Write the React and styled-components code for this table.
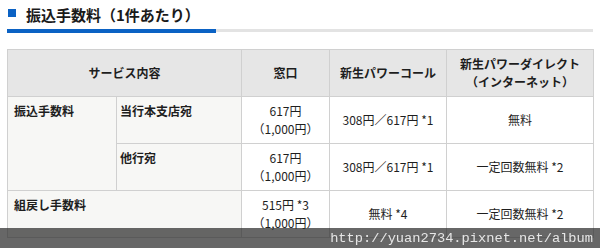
import styled, { createGlobalStyle } from "styled-components";

const GlobalStyle = createGlobalStyle`
  html, body {
    margin: 0;
    padding: 0;
    background: #fff;
  }
  body {
    font-family: "Noto Sans CJK JP", "Noto Sans", sans-serif;
    color: #1e1e1e;
  }
`;

const rows = [
  {
    label: "振込手数料",
    sub: "当行本支店宛",
    counter: ["617円", "（1,000円）"],
    call: "308円／617円 *1",
    direct: "無料",
    labelSpan: 2,
  },
  {
    sub: "他行宛",
    counter: ["617円", "（1,000円）"],
    call: "308円／617円 *1",
    direct: "一定回数無料 *2",
  },
  {
    label: "組戻し手数料",
    wide: true,
    counter: ["515円 *3", "（1,000円）"],
    call: "無料 *4",
    direct: "一定回数無料 *2",
  },
];

const App = () => {
  return (
    <>
      <GlobalStyle />
      <Page>
        <Heading>
          <Marker />
          <Title>振込手数料（1件あたり）</Title>
        </Heading>
        <Rule>
          <RuleAccent />
        </Rule>
        <FeeTable>
          <colgroup>
            <col style={{ width: 109 }} />
            <col style={{ width: 125 }} />
            <col style={{ width: 88 }} />
            <col style={{ width: 117 }} />
            <col style={{ width: 147 }} />
          </colgroup>
          <thead>
            <tr>
              <Th colSpan={2}>サービス内容</Th>
              <Th>窓口</Th>
              <Th>新生パワーコール</Th>
              <Th>
                新生パワーダイレクト
                <br />
                （インターネット）
              </Th>
            </tr>
          </thead>
          <tbody>
            {rows.map((row, i) => (
              <tr key={i}>
                {row.label && (
                  <Label
                    rowSpan={row.labelSpan || 1}
                    colSpan={row.wide ? 2 : 1}
                  >
                    {row.label}
                  </Label>
                )}
                {row.sub && <Label $sub>{row.sub}</Label>}
                <Td>
                  {row.counter[0]}
                  <br />
                  {row.counter[1]}
                </Td>
                <Td>{row.call}</Td>
                <Td>{row.direct}</Td>
              </tr>
            ))}
          </tbody>
        </FeeTable>
      </Page>
      <Watermark>http://yuan2734.pixnet.net/album</Watermark>
    </>
  );
};

const Page = styled.div`
  padding: 4px 7px 0;
`;

const Heading = styled.div`
  display: flex;
  align-items: flex-start;
  gap: 10px;
  height: 22px;
`;

const Marker = styled.span`
  width: 8px;
  height: 8px;
  margin: 5px 0 0 1px;
  background: #0b62c4;
`;

const Title = styled.h2`
  margin: 0;
  font-size: 15px;
  line-height: 22px;
  font-weight: 700;
  color: #1a1a1a;
`;

const Rule = styled.div`
  margin-top: 3px;
  width: 586px;
  height: 3px;
  background: #e3e3e3;
  display: flex;
`;

const RuleAccent = styled.div`
  width: 209px;
  height: 4px;
  background: #0b62c4;
`;

const FeeTable = styled.table`
  margin-top: 17px;
  width: 586px;
  table-layout: fixed;
  border-collapse: collapse;
  font-size: 12px;
  line-height: 18px;

  td,
  th {
    border: 1px solid #d0d0d0;
    padding: 5px 6px;
  }
`;

const Th = styled.th`
  height: 35px;
  background: #e6e6e6;
  font-weight: 700;
  text-align: center;
  vertical-align: middle;
`;

const Label = styled.td`
  height: 36px;
  background: #f7f7f5;
  font-weight: 700;
  text-align: left;
  vertical-align: top;
  && {
    padding-left: ${(p) => (p.$sub ? "3px" : "6px")};
  }
`;

const Td = styled.td`
  background: #fff;
  text-align: center;
  vertical-align: middle;
  white-space: nowrap;
`;

const Watermark = styled.div`
  position: fixed;
  left: 0;
  right: 0;
  bottom: 0;
  height: 20px;
  padding-right: 7px;
  background: rgba(45, 45, 45, 0.72);
  color: #e6e6e6;
  font-family: "Liberation Mono", monospace;
  font-size: 13.7px;
  line-height: 22px;
  text-align: right;
  letter-spacing: 0;
`;

export default App;
